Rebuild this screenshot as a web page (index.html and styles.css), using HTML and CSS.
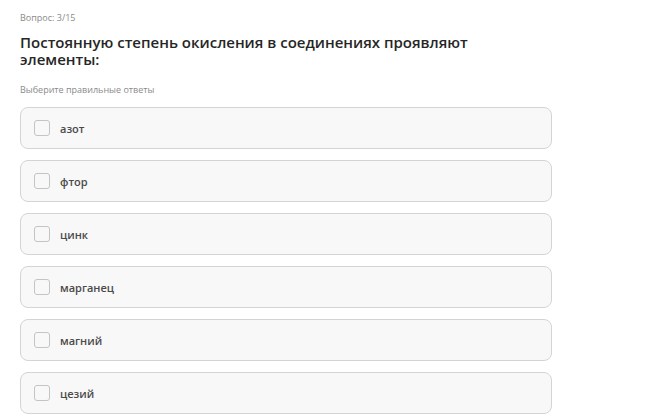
FILE: index.html
```html
<!DOCTYPE html>
<html lang="ru">
<head>
    <meta charset="UTF-8">
    <title>Вопрос 3/15</title>
    <link rel="stylesheet" href="styles.css">
</head>
<body>
    <div class="quiz">
        <div class="counter">Вопрос: 3/15</div>
        <h2 class="question">Постоянную степень окисления в соединениях проявляют элементы:</h2>
        <div class="hint">Выберите правильные ответы</div>
        <div class="answers">
            <label class="answer"><span class="box"></span><span class="text">азот</span></label>
            <label class="answer"><span class="box"></span><span class="text">фтор</span></label>
            <label class="answer"><span class="box"></span><span class="text">цинк</span></label>
            <label class="answer"><span class="box"></span><span class="text">марганец</span></label>
            <label class="answer"><span class="box"></span><span class="text">магний</span></label>
            <label class="answer"><span class="box"></span><span class="text">цезий</span></label>
        </div>
    </div>
</body>
</html>
```

FILE: styles.css
```css
body {
    margin: 0;
    background-color: #ffffff;
    font-family: "Open Sans", Arial, sans-serif;
}
.quiz {
    width: 532px;
    padding: 12px 0 0 20px;
}
.counter {
    font-size: 9px;
    color: #8a8a8a;
    line-height: 12px;
}
.question {
    max-width: 500px;
    margin: 10px 0 0;
    font-size: 15px;
    font-weight: 600;
    line-height: 17px;
    color: #262626;
}
.hint {
    margin-top: 16px;
    font-size: 9px;
    color: #8a8a8a;
    line-height: 12px;
}
.answers {
    margin-top: 11px;
    display: flex;
    flex-direction: column;
    gap: 11px;
}
.answer {
    display: flex;
    align-items: center;
    height: 40px;
    padding-left: 13px;
    background-color: #f8f8f8;
    border: 1px solid #d4d4d4;
    border-radius: 8px;
}
.box {
    width: 14px;
    height: 14px;
    border: 1px solid #c4c4c4;
    border-radius: 3px;
    background-color: #f8f8f8;
}
.text {
    margin-left: 10px;
    font-size: 11px;
    font-weight: 600;
    color: #4a4a4a;
}
```
